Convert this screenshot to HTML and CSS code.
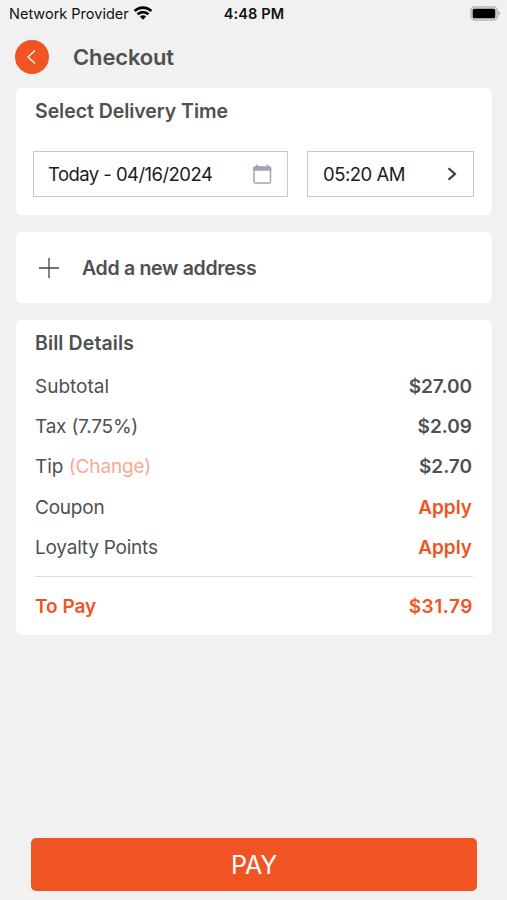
FILE: index.html
```html
<!DOCTYPE html>
<html lang="en">
<head>
<meta charset="utf-8">
<title>Checkout</title>
<link rel="stylesheet" href="styles.css">
</head>
<body>
<div class="screen">
  <div class="status">
    <div class="carrier"><span>Network Provider</span>
      <svg class="wifi" width="20" height="14" viewBox="0 0 20 14"><path d="M1.600 5A12 12 0 0 1 18.400 5M4.600 8.300A7.700 7.700 0 0 1 15.400 8.300" fill="none" stroke="#050505" stroke-width="2.700"/><path d="M10 13.700L6.900 10.600a4.400 4.400 0 0 1 6.200 0z" fill="#050505"/></svg>
    </div>
    <span class="clock">4:48 PM</span>
    <svg class="battery" width="31" height="15" viewBox="0 0 31 15"><rect x=".9" y=".9" width="26.500" height="13.200" rx="4" fill="#d8d8d8" stroke="#b5b5b5" stroke-width="1.400"/><rect x="2.700" y="2.800" width="22.500" height="9.400" rx="1.500" fill="#000"/><path d="M28.500 5.300q3 2.200 0 4.400z" fill="#a5a5a5"/></svg>
  </div>
  <header class="header">
    <button class="back" aria-label="Back"><svg width="34" height="34" viewBox="0 0 34 34"><path d="M20 10.500L13 17L20 23.500" fill="none" stroke="#fff" stroke-width="1.300"/></svg></button>
    <h1>Checkout</h1>
  </header>
  <section class="card delivery">
    <h2>Select Delivery Time</h2>
    <div class="fields">
      <div class="field date"><span>Today - 04/16/2024</span>
        <svg width="20" height="20" viewBox="0 0 20 20"><rect x="2" y="3" width="16.500" height="16" rx="1.500" fill="none" stroke="#a2a3ba" stroke-width="1.500"/><path d="M1.300 4q0-1.500 1.500-1.500h15q1.500 0 1.500 1.500v2.800h-18zM4 .8h1.800v2H4zM14.700.8h1.800v2h-1.800z" fill="#a2a3ba"/></svg>
      </div>
      <div class="field time"><span>05:20 AM</span>
        <svg width="10" height="14" viewBox="0 0 10 14"><path d="M1.500 1.300L7.900 7L1.500 12.700" fill="none" stroke="#3c3c3c" stroke-width="2.200"/></svg>
      </div>
    </div>
  </section>
  <section class="card address">
    <svg width="20" height="20" viewBox="0 0 20 20"><path d="M10 0v20M0 10h20" stroke="#444" stroke-width="1.300"/></svg>
    <span>Add a new address</span>
  </section>
  <section class="card bill">
    <h2>Bill Details</h2>
    <div class="row"><span>Subtotal</span><b>$27.00</b></div>
    <div class="row"><span class="tight">Tax (7.75%)</span><b>$2.09</b></div>
    <div class="row"><span>Tip <a class="change">(Change)</a></span><b>$2.70</b></div>
    <div class="row"><span class="tight">Coupon</span><b class="accent">Apply</b></div>
    <div class="row"><span class="tight">Loyalty Points</span><b class="accent">Apply</b></div>
    <div class="total"><b>To Pay</b><b class="amount">$31.79</b></div>
  </section>
  <button class="pay">PAY</button>
</div>
</body>
</html>
```
FILE: styles.css
```css
* { box-sizing: border-box; }
body { margin: 0; font-family: Inter, sans-serif; background: #f1f1f1; color: #505050; }
h1, h2 { margin: 0; font-weight: 600; }
button { border: 0; padding: 0; font-family: inherit; }
svg { display: block; flex: none; }
b { font-weight: 600; }
.screen { height: 900px; display: flex; flex-direction: column; padding: 0 15px 9px 16px; }
.status { height: 26px; margin: 0 -9px 0 -7px; display: grid; grid-template-columns: 1fr auto 1fr; align-items: center; color: #111; font-size: 14.500px; }
.carrier { display: flex; align-items: center; gap: 4px; white-space: nowrap; }
.wifi { margin-top: -1px; }
.clock { font-weight: 600; margin-left: -2px; letter-spacing: 0.1px; }
.battery { justify-self: end; }
.header { height: 62px; display: flex; align-items: center; gap: 24px; margin-left: -1px; }
.back { width: 34px; height: 34px; border-radius: 50%; background: #f05423; }
.header h1 { font-size: 22px; letter-spacing: -0.150px; }
.card { background: #fff; border-radius: 6px; flex: none; }
.card h2 { font-size: 19.500px; line-height: 24px; }
.delivery { height: 127px; padding: 11px 17px 0; }
.delivery h2 { padding-left: 2px; letter-spacing: -0.050px; }
.fields { display: flex; gap: 19px; margin-top: 28px; }
.field { height: 46px; border: 1px solid #c7c8cc; display: flex; align-items: center; justify-content: space-between; color: #1c1c1c; font-size: 18.500px; padding: 0 15px 0 14px; white-space: nowrap; }
.date { width: 255px; letter-spacing: -0.550px; }
.time { width: 167px; padding: 0 16px 0 15px; letter-spacing: -0.500px; }
.address { height: 71px; margin-top: 17px; padding-left: 23px; display: flex; align-items: center; gap: 23px; font-size: 19.500px; font-weight: 600; letter-spacing: -0.300px; }
.bill { height: 315px; margin-top: 17px; padding: 11px 19px 0; font-size: 19px; }
.bill h2 { margin-bottom: 11px; letter-spacing: 0.1px; }
.row { display: flex; justify-content: space-between; align-items: center; height: 40.400px; }
.row b { margin-right: 1px; }
.tight { letter-spacing: -0.220px; }
.change { color: #f8ab91; letter-spacing: -0.150px; }
.accent { color: #f05423; }
.total { margin-top: 8px; padding-top: 18px; border-top: 1px solid #ddd; display: flex; justify-content: space-between; color: #f05423; line-height: 24px; }
.amount { letter-spacing: 0.550px; }
.pay { margin: auto 15px 0; height: 53px; padding-top: 1px; flex: none; border-radius: 5px; background: #f05423; color: #fff; font-size: 25px; letter-spacing: -0.2px; }
```
